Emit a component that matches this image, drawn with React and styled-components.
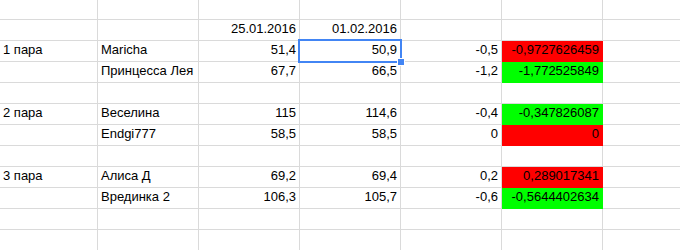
import React from "react"
import styled, { createGlobalStyle } from "styled-components"

const GlobalStyle = createGlobalStyle`
  html, body {
    margin: 0;
    padding: 0;
    background: #fff;
  }
  body {
    font-family: Arial, "Liberation Sans", sans-serif;
    overflow: hidden;
  }
`

const Sheet = styled.div`
  display: grid;
  grid-template-columns: 98px 101px 101px 101px 101px 101px 101px;
  grid-template-rows: 20px repeat(11, 21px);
  width: 704px;
`

const Cell = styled.div`
  position: relative;
  box-sizing: border-box;
  display: flex;
  align-items: flex-end;
  justify-content: ${props => (props.$right ? "flex-end" : "flex-start")};
  padding: 0 3px 3px 3px;
  border-right: 1px solid ${props => props.$fill || "#dadada"};
  border-bottom: 1px solid ${props => props.$fill || "#dadada"};
  background: ${props => props.$fill || "#fff"};
  color: #000;
  font-size: 13px;
  line-height: 16px;
  white-space: nowrap;
`

const Selection = styled.div`
  position: absolute;
  top: -2px;
  left: -2px;
  right: -2px;
  bottom: -2px;
  border: 2px solid #4285f4;
  pointer-events: none;
  z-index: 2;

  &::after {
    content: "";
    position: absolute;
    right: -5px;
    bottom: -5px;
    width: 6px;
    height: 6px;
    background: #4285f4;
    border: 1px solid #fff;
  }
`

const RED = "#ff0000"
const GREEN = "#00ff00"

const rows = [
  [],
  ["", "", "25.01.2016", "01.02.2016"],
  ["1 пара", "Maricha", "51,4", "50,9", "-0,5", ["-0,9727626459", RED]],
  ["", "Принцесса Лея", "67,7", "66,5", "-1,2", ["-1,772525849", GREEN]],
  [],
  ["2 пара", "Веселина", "115", "114,6", "-0,4", ["-0,347826087", GREEN]],
  ["", "Endgi777", "58,5", "58,5", "0", ["0", RED]],
  [],
  ["3 пара", "Алиса Д", "69,2", "69,4", "0,2", ["0,289017341", RED]],
  ["", "Врединка 2", "106,3", "105,7", "-0,6", ["-0,5644402634", GREEN]],
  [],
  [],
]

const App = () => {
  return (
    <>
      <GlobalStyle />
      <Sheet>
        {rows.map((row, r) =>
          Array.from({ length: 7 }).map((_, c) => {
            const value = row[c]
            const text = Array.isArray(value) ? value[0] : value
            const fill = Array.isArray(value) ? value[1] : undefined
            return (
              <Cell key={`${r}-${c}`} $right={c >= 2} $fill={fill}>
                {text}
                {r === 2 && c === 3 && <Selection />}
              </Cell>
            )
          })
        )}
      </Sheet>
    </>
  )
}

export default App
